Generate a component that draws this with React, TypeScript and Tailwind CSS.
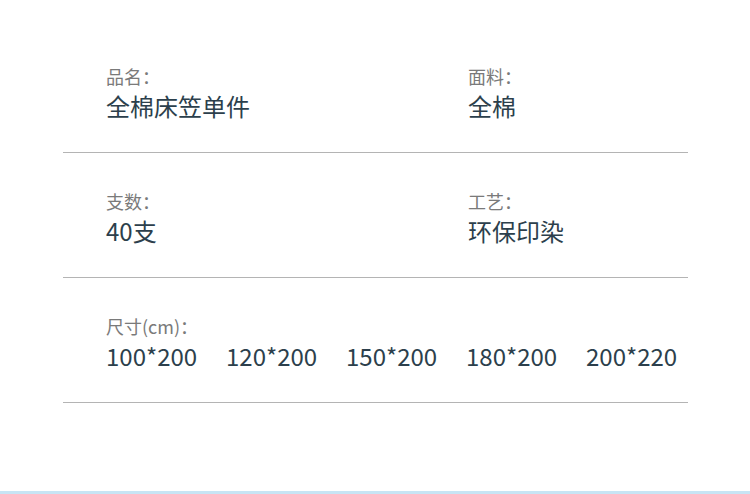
const font = { fontFamily: '"Noto Sans CJK SC", "Noto Sans", sans-serif' };

const rows = [
  [
    { label: "品名：", value: "全棉床笠单件" },
    { label: "面料：", value: "全棉" },
  ],
  [
    { label: "支数：", value: "40支" },
    { label: "工艺：", value: "环保印染" },
  ],
];

const sizes = ["100*200", "120*200", "150*200", "180*200", "200*220"];

export default function App() {
  return (
    <div className="w-[750px] h-[494px] bg-white flex flex-col" style={font}>
      <div className="mx-[63px] w-[625px] pt-[28px]">
        {rows.map((row, i) => (
          <div key={i} className="grid grid-cols-[362px_1fr] pl-[43px] pt-[36px] pb-[30px] border-b border-[#b4b4b4]">
            {row.map((cell) => (
              <div key={cell.label} className="flex flex-col gap-[2px]">
                <span className="text-[18px] leading-[24px] text-[#7a7a7a]">{cell.label}</span>
                <span className="text-[24px] leading-[32px] text-[#2c3f4c]">{cell.value}</span>
              </div>
            ))}
          </div>
        ))}
        <div className="pl-[43px] pt-[36px] pb-[30px] border-b border-[#b4b4b4] flex flex-col gap-[2px]">
          <span className="text-[18px] leading-[24px] text-[#7a7a7a]">尺寸(cm)：</span>
          <div className="flex">
            {sizes.map((s) => (
              <span key={s} className="w-[120px] shrink-0 text-[24px] leading-[32px] text-[#2c3f4c]">
                {s}
              </span>
            ))}
          </div>
        </div>
      </div>
      <div className="mt-auto h-[3px] bg-[#c8e4f4]" />
    </div>
  );
}
